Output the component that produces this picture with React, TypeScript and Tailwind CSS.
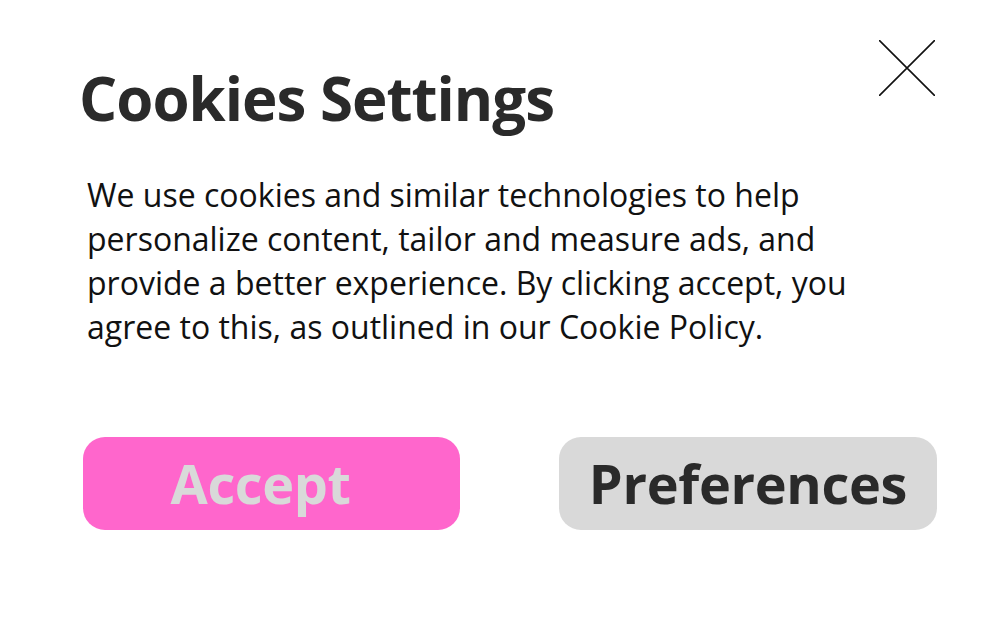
export default function App() {
  return (
    <div
      className="w-[1000px] h-[625px] bg-white flex flex-col"
      style={{ fontFamily: '"Open Sans", "Liberation Sans", sans-serif' }}
    >
      {/* header: title + close */}
      <div className="flex items-start justify-between pl-[79px] pr-[65px] pt-[40px]">
        <h1 className="mt-[28px] text-[60px] leading-[60px] font-bold tracking-[-1px] text-[#2a2a2a]">
          Cookies Settings
        </h1>
        <button aria-label="Close" className="w-[56px] h-[56px]">
          <svg width="56" height="56" viewBox="0 0 56 56" fill="none">
            <path d="M0 0 L56 56 M56 0 L0 56" stroke="#111" strokeWidth="1.6" />
          </svg>
        </button>
      </div>

      <p className="ml-[87px] mt-[45px] text-[32px] leading-[44px] text-[#111]">
        We use cookies and similar technologies to help
        <br />
        personalize content, tailor and measure ads, and
        <br />
        provide a better experience. By clicking accept, you
        <br />
        agree to this, as outlined in our Cookie Policy.
      </p>

      <div className="flex gap-[99px] ml-[83px] mt-[88px]">
        <button className="w-[377px] h-[93px] rounded-[22px] bg-[#ff66cc] pr-[22px] text-[54px] font-bold tracking-[-0.4px] text-[#d9d9d9]">
          Accept
        </button>
        <button className="w-[378px] h-[93px] rounded-[22px] bg-[#d9d9d9] text-[54px] font-bold tracking-[-0.3px] text-[#2a2a2a]">
          Preferences
        </button>
      </div>
    </div>
  );
}
